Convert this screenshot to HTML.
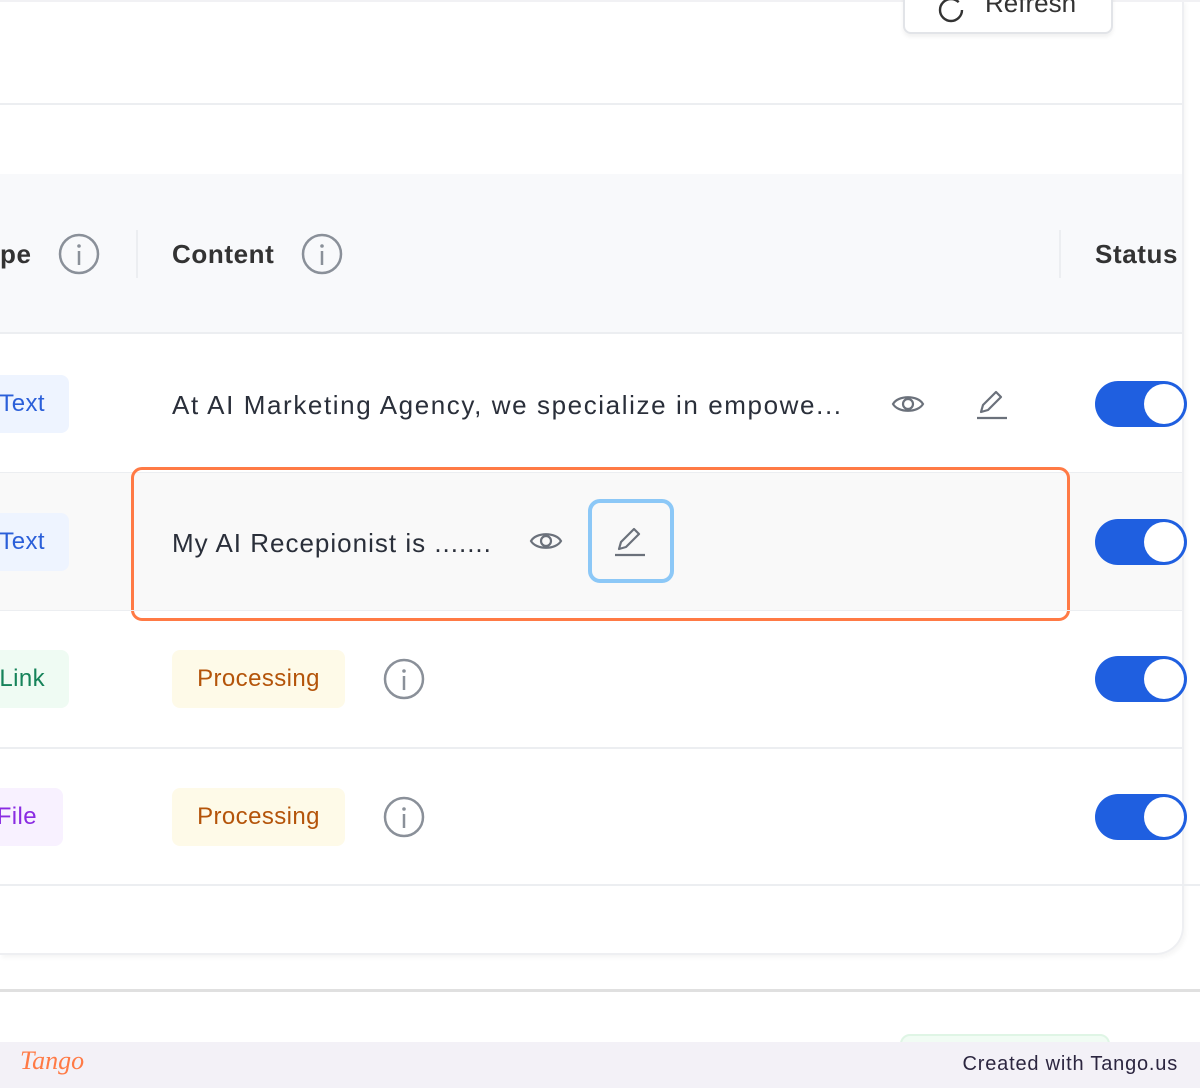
<!DOCTYPE html>
<html><head><style>
*{margin:0;padding:0;box-sizing:border-box}
body{width:1200px;height:1088px;position:relative;overflow:hidden;background:#fff;font-family:"Liberation Sans",sans-serif;color:#2a2f3a}
.a{position:absolute}
.t{font-size:26px;white-space:nowrap}
.h{font-weight:bold;letter-spacing:0.6px;font-size:26px;white-space:nowrap;color:#333}
.badge{position:absolute;border-radius:8px;font-size:24px;display:flex;align-items:center;justify-content:center;letter-spacing:0.4px}
.tog{position:absolute;left:1095px;width:92px;height:46px;border-radius:23px;background:#1f5fe0}
.tog::after{content:"";position:absolute;right:3px;top:3px;width:40px;height:40px;border-radius:50%;background:#fff}
.hl{position:absolute;left:0;width:1182px;height:1px;background:#eceef1}
</style></head><body>
<div class="a" style="left:0;top:0;width:1184px;height:955px;border-right:2px solid #eeeff2;border-bottom:2px solid #eeeff2;border-bottom-right-radius:28px;box-shadow:2px 3px 4px rgba(0,0,0,0.04)"></div>
<div class="a" style="left:0;top:0;width:1200px;height:2px;background:#f1f1f4"></div>
<div class="a" style="left:903px;top:-20px;width:210px;height:54px;border:2px solid #e2e4e8;border-radius:8px;box-shadow:0 3px 4px rgba(0,0,0,0.06);background:#fff;overflow:hidden">
 <svg class="a" style="left:32px;top:14px" width="28" height="28" viewBox="0 0 28 28"><circle cx="14" cy="14" r="11" fill="none" stroke="#333" stroke-width="2.4" stroke-dasharray="60 10"/></svg>
 <div class="a t" style="left:80px;top:6px;color:#333">Refresh</div>
</div>
<div class="hl" style="top:103px;height:2px"></div>
<div class="a" style="left:0;top:174px;width:1182px;height:160px;background:#f8f9fb;border-bottom:2px solid #eceef1"></div>
<div class="a h" style="left:0;top:239px">pe</div>
<svg class="a" style="left:58px;top:233px" width="42" height="42" viewBox="0 0 42 42"><circle cx="21" cy="21" r="19" fill="none" stroke="#8a9099" stroke-width="2.5"/><circle cx="21" cy="13" r="1.8" fill="#8a9099"/><path d="M21 18v14" stroke="#8a9099" stroke-width="2.5"/></svg>
<div class="a" style="left:136px;top:230px;width:2px;height:48px;background:#eceef1"></div>
<div class="a h" style="left:172px;top:239px">Content</div>
<svg class="a" style="left:301px;top:233px" width="42" height="42" viewBox="0 0 42 42"><circle cx="21" cy="21" r="19" fill="none" stroke="#8a9099" stroke-width="2.5"/><circle cx="21" cy="13" r="1.8" fill="#8a9099"/><path d="M21 18v14" stroke="#8a9099" stroke-width="2.5"/></svg>
<div class="a" style="left:1059px;top:230px;width:2px;height:48px;background:#eceef1"></div>
<div class="a h" style="left:1095px;top:239px">Status</div>

<div class="badge" style="left:-10px;top:375px;width:79px;height:58px;background:#eef4ff;color:#2b5fd9;justify-content:flex-end;padding-right:24px">Text</div>
<div class="a t" style="left:172px;top:390px;letter-spacing:1.6px">At AI Marketing Agency, we specialize in empowe...</div>
<svg class="a" style="left:890px;top:390px" width="36" height="28" viewBox="0 0 36 28"><path d="M3 14C8 5 28 5 33 14C28 23 8 23 3 14Z" fill="none" stroke="#6b717b" stroke-width="2.2"/><circle cx="18" cy="14" r="5" fill="none" stroke="#6b717b" stroke-width="2.2"/></svg>
<svg class="a" style="left:975px;top:386px" width="36" height="36" viewBox="0 0 36 36"><path d="M6 26l2-7L21 6l5 5L13 24z" fill="none" stroke="#6b717b" stroke-width="2.2" stroke-linejoin="round"/><path d="M2 32h30" stroke="#6b717b" stroke-width="2.2"/></svg>
<div class="tog" style="top:381px"></div>
<div class="hl" style="top:472px"></div>

<div class="a" style="left:0;top:473px;width:1182px;height:137px;background:#f9f9f9"></div>
<div class="badge" style="left:-10px;top:513px;width:79px;height:58px;background:#eef4ff;color:#2b5fd9;justify-content:flex-end;padding-right:24px">Text</div>
<div class="a t" style="left:172px;top:528px;letter-spacing:1px">My AI Recepionist is .......</div>
<svg class="a" style="left:528px;top:527px" width="36" height="28" viewBox="0 0 36 28"><path d="M3 14C8 5 28 5 33 14C28 23 8 23 3 14Z" fill="none" stroke="#6b717b" stroke-width="2.2"/><circle cx="18" cy="14" r="5" fill="none" stroke="#6b717b" stroke-width="2.2"/></svg>
<div class="a" style="left:588px;top:499px;width:86px;height:84px;border:4px solid #8cc8f7;border-radius:12px"></div>
<svg class="a" style="left:613px;top:523px" width="36" height="36" viewBox="0 0 36 36"><path d="M6 26l2-7L21 6l5 5L13 24z" fill="none" stroke="#6b717b" stroke-width="2.2" stroke-linejoin="round"/><path d="M2 32h30" stroke="#6b717b" stroke-width="2.2"/></svg>
<div class="tog" style="top:519px"></div>
<div class="a" style="left:131px;top:467px;width:939px;height:154px;border:3px solid #ff7a45;border-radius:11px"></div>
<div class="hl" style="top:610px"></div>

<div class="badge" style="left:-10px;top:650px;width:79px;height:58px;background:#effbf3;color:#16835a;justify-content:flex-end;padding-right:24px">Link</div>
<div class="badge" style="left:172px;top:650px;width:173px;height:58px;background:#fefae8;color:#b4540a">Processing</div>
<svg class="a" style="left:383px;top:658px" width="42" height="42" viewBox="0 0 42 42"><circle cx="21" cy="21" r="19" fill="none" stroke="#8a9099" stroke-width="2.5"/><circle cx="21" cy="13" r="1.8" fill="#8a9099"/><path d="M21 18v14" stroke="#8a9099" stroke-width="2.5"/></svg>
<div class="tog" style="top:656px"></div>
<div class="hl" style="top:747px;height:2px"></div>

<div class="badge" style="left:-10px;top:788px;width:73px;height:58px;background:#f8f1ff;color:#8a2be2;justify-content:flex-end;padding-right:26px">File</div>
<div class="badge" style="left:172px;top:788px;width:173px;height:58px;background:#fefae8;color:#b4540a">Processing</div>
<svg class="a" style="left:383px;top:796px" width="42" height="42" viewBox="0 0 42 42"><circle cx="21" cy="21" r="19" fill="none" stroke="#8a9099" stroke-width="2.5"/><circle cx="21" cy="13" r="1.8" fill="#8a9099"/><path d="M21 18v14" stroke="#8a9099" stroke-width="2.5"/></svg>
<div class="tog" style="top:794px"></div>
<div class="hl" style="top:884px;height:2px;width:1200px"></div>

<div class="a" style="left:0;top:989px;width:1200px;height:3px;background:#e0e0e0"></div>
<div class="a" style="left:900px;top:1034px;width:210px;height:30px;border:2px solid #dff5e5;border-radius:10px;background:#f1fcf4"></div>
<div class="a" style="left:0;top:1042px;width:1200px;height:46px;background:#f3f1f7"></div>
<div class="a" style="left:20px;top:1046px;font-family:'Liberation Serif',serif;font-style:italic;font-size:26px;color:#ff7a45">Tango</div>
<div class="a" style="right:22px;top:1053px;font-size:20px;letter-spacing:0.8px;color:#2c2640">Created with Tango.us</div>
</body></html>
